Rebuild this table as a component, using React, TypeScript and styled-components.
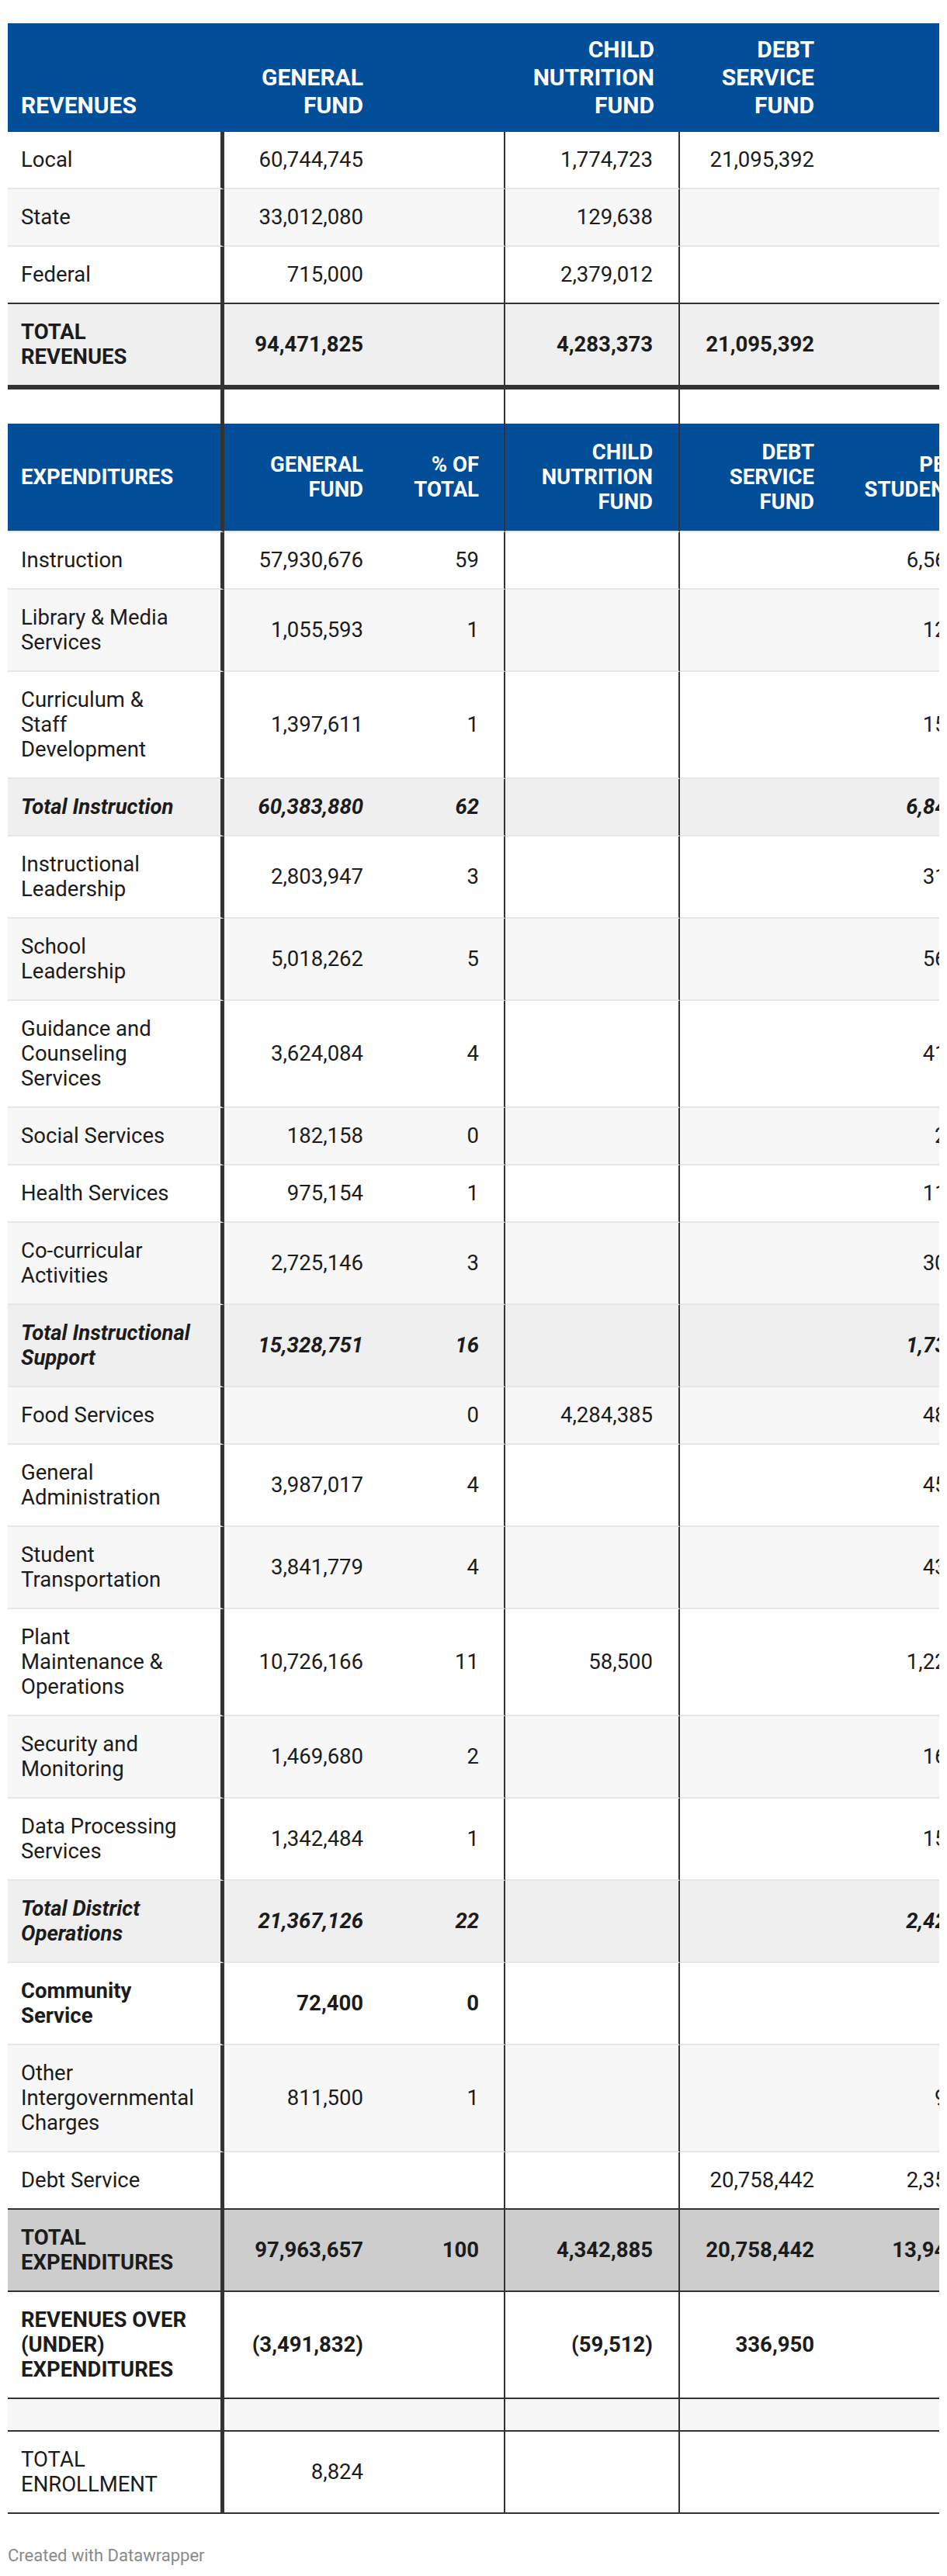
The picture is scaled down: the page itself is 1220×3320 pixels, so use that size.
import React from "react";
import styled, { createGlobalStyle, css } from "styled-components";

const BLUE = "#024e98";
const INK = "#1c1c1c";
const DARK = "#333333";
const LIGHT = "#e6e6e6";

const GlobalStyle = createGlobalStyle`
  html, body { margin: 0; padding: 0; background: #ffffff; }
  body { font-family: Roboto, "Liberation Sans", Arial, sans-serif; color: ${INK}; }
`;

type Divider = "thick" | "thin" | "none";
type Rule = "light" | "dark" | "thick" | "none";
type Shade = "white" | "alt" | "sub" | "grand";
type Weight = "normal" | "bold" | "boldItalic";

const COLUMNS: { width: number; divider: Divider; padRight: number }[] = [
  { width: 279, divider: "thick", padRight: 35 },
  { width: 212, divider: "none", padRight: 33 },
  { width: 150, divider: "thin", padRight: 32 },
  { width: 225, divider: "thin", padRight: 33 },
  { width: 206, divider: "none", padRight: 33 },
  { width: 186, divider: "none", padRight: 33 },
];
const TEMPLATE = COLUMNS.map((c) => `${c.width}px`).join(" ");
const TABLE_WIDTH = COLUMNS.reduce((s, c) => s + c.width, 0);

const SHADES: Record<Shade, string> = {
  white: "#ffffff",
  alt: "#f7f7f7",
  sub: "#efefef",
  grand: "#cdcdcd",
};

const RULES: Record<Rule, string> = {
  light: `2px solid ${LIGHT}`,
  dark: `2px solid ${DARK}`,
  thick: `6px solid ${DARK}`,
  none: "0",
};

const Page = styled.main`
  padding: 30px 10px 20px 10px;
`;

const Viewport = styled.div`
  width: 1200px;
  overflow: hidden;
`;

const Table = styled.div`
  display: flex;
  flex-direction: column;
  width: ${TABLE_WIDTH}px;
`;

const Cell = styled.div<{ $divider: Divider; $label: boolean; $padRight: number }>`
  box-sizing: border-box;
  display: flex;
  align-items: center;
  justify-content: ${(p) => (p.$label ? "flex-start" : "flex-end")};
  text-align: ${(p) => (p.$label ? "left" : "right")};
  padding: 20px ${(p) => p.$padRight}px 20px ${(p) => (p.$label ? 17 : 16)}px;
  border-right: ${(p) =>
    p.$divider === "thick"
      ? `5px solid ${DARK}`
      : p.$divider === "thin"
      ? `2px solid ${DARK}`
      : "0"};
`;

const Row = styled.div<{ $shade: Shade; $rule: Rule; $weight: Weight; $spacer?: boolean }>`
  display: grid;
  grid-template-columns: ${TEMPLATE};
  background: ${(p) => SHADES[p.$shade]};
  font-size: 27.5px;
  line-height: 32px;
  color: ${INK};
  font-weight: ${(p) => (p.$weight === "normal" ? 400 : 700)};
  font-style: ${(p) => (p.$weight === "boldItalic" ? "italic" : "normal")};

  & > ${Cell} {
    border-bottom: ${(p) => RULES[p.$rule]};
    ${(p) =>
      p.$spacer &&
      css`
        padding-top: 0;
        padding-bottom: 0;
        min-height: ${p.$rule === "none" ? 44 : 42}px;
      `}
  }
`;

const HeadRow = styled.div`
  display: grid;
  grid-template-columns: ${TEMPLATE};
  background: ${BLUE};
  color: #ffffff;
  font-size: 30px;
  line-height: 36px;
  font-weight: 700;
  text-transform: uppercase;

  & > ${Cell} {
    align-items: flex-end;
    padding-top: 16px;
    padding-bottom: 16px;
    border-right: 0;
  }
`;

const BandRow = styled.div`
  display: grid;
  grid-template-columns: ${TEMPLATE};
  background: ${BLUE};
  color: #ffffff;
  font-size: 27.5px;
  line-height: 32px;
  font-weight: 700;
  text-transform: uppercase;

  & > ${Cell} {
    padding-top: 21px;
    padding-bottom: 21px;
    border-bottom: ${RULES.light};
  }
`;

const Credit = styled.p`
  margin: 41px 0 0 0;
  font-size: 22px;
  line-height: 26px;
  color: #8a8a8a;
`;

type DataRow = {
  label: string;
  values: [string, string, string, string, string];
  shade: Shade;
  rule?: Rule;
  weight?: Weight;
  spacer?: boolean;
  band?: boolean;
};

const E = "";

const REVENUE_HEAD = ["Revenues", "General Fund", "", "Child Nutrition Fund", "Debt Service Fund", ""];
const EXPENSE_HEAD = [
  "Expenditures",
  "General Fund",
  "% of Total",
  "Child Nutrition Fund",
  "Debt Service Fund",
  "Per Student",
];

const ROWS: DataRow[] = [
  { label: "Local", values: ["60,744,745", E, "1,774,723", "21,095,392", E], shade: "white" },
  { label: "State", values: ["33,012,080", E, "129,638", E, E], shade: "alt" },
  { label: "Federal", values: ["715,000", E, "2,379,012", E, E], shade: "white", rule: "dark" },
  {
    label: "TOTAL REVENUES",
    values: ["94,471,825", E, "4,283,373", "21,095,392", E],
    shade: "sub",
    weight: "bold",
    rule: "thick",
  },
  { label: E, values: [E, E, E, E, E], shade: "white", rule: "none", spacer: true },
  { label: E, values: [E, E, E, E, E], shade: "white", band: true },
  { label: "Instruction", values: ["57,930,676", "59", E, E, "6,565"], shade: "white" },
  { label: "Library & Media Services", values: ["1,055,593", "1", E, E, "120"], shade: "alt" },
  { label: "Curriculum & Staff Development", values: ["1,397,611", "1", E, E, "158"], shade: "white" },
  {
    label: "Total Instruction",
    values: ["60,383,880", "62", E, E, "6,843"],
    shade: "sub",
    weight: "boldItalic",
  },
  { label: "Instructional Leadership", values: ["2,803,947", "3", E, E, "318"], shade: "white" },
  { label: "School Leadership", values: ["5,018,262", "5", E, E, "569"], shade: "alt" },
  { label: "Guidance and Counseling Services", values: ["3,624,084", "4", E, E, "411"], shade: "white" },
  { label: "Social Services", values: ["182,158", "0", E, E, "21"], shade: "alt" },
  { label: "Health Services", values: ["975,154", "1", E, E, "111"], shade: "white" },
  { label: "Co-curricular Activities", values: ["2,725,146", "3", E, E, "309"], shade: "alt" },
  {
    label: "Total Instructional Support",
    values: ["15,328,751", "16", E, E, "1,737"],
    shade: "sub",
    weight: "boldItalic",
  },
  { label: "Food Services", values: [E, "0", "4,284,385", E, "486"], shade: "alt" },
  { label: "General Administration", values: ["3,987,017", "4", E, E, "452"], shade: "white" },
  { label: "Student Transportation", values: ["3,841,779", "4", E, E, "435"], shade: "alt" },
  {
    label: "Plant Maintenance & Operations",
    values: ["10,726,166", "11", "58,500", E, "1,222"],
    shade: "white",
  },
  { label: "Security and Monitoring", values: ["1,469,680", "2", E, E, "167"], shade: "alt" },
  { label: "Data Processing Services", values: ["1,342,484", "1", E, E, "152"], shade: "white" },
  {
    label: "Total District Operations",
    values: ["21,367,126", "22", E, E, "2,422"],
    shade: "sub",
    weight: "boldItalic",
  },
  { label: "Community Service", values: ["72,400", "0", E, E, "8"], shade: "white", weight: "bold" },
  { label: "Other Intergovernmental Charges", values: ["811,500", "1", E, E, "92"], shade: "alt" },
  { label: "Debt Service", values: [E, E, E, "20,758,442", "2,353"], shade: "white", rule: "dark" },
  {
    label: "TOTAL EXPENDITURES",
    values: ["97,963,657", "100", "4,342,885", "20,758,442", "13,947"],
    shade: "grand",
    weight: "bold",
    rule: "dark",
  },
  {
    label: "REVENUES OVER (UNDER) EXPENDITURES",
    values: ["(3,491,832)", E, "(59,512)", "336,950", E],
    shade: "white",
    weight: "bold",
    rule: "dark",
  },
  { label: E, values: [E, E, E, E, E], shade: "alt", rule: "dark", spacer: true },
  { label: "TOTAL ENROLLMENT", values: ["8,824", E, E, E, E], shade: "white", rule: "dark" },
];

function Cells({ texts, head }: { texts: string[]; head?: boolean }) {
  return (
    <>
      {texts.map((t, i) => (
        <Cell
          key={i}
          $divider={head ? "none" : COLUMNS[i].divider}
          $label={i === 0}
          $padRight={COLUMNS[i].padRight}
        >
          {t}
        </Cell>
      ))}
    </>
  );
}

export default function App() {
  return (
    <>
      <GlobalStyle />
      <Page>
        <Viewport>
          <Table>
            <HeadRow>
              <Cells texts={REVENUE_HEAD} head />
            </HeadRow>
            {ROWS.map((r, i) =>
              r.band ? (
                <BandRow key={i}>
                  <Cells texts={EXPENSE_HEAD} />
                </BandRow>
              ) : (
                <Row
                  key={i}
                  $shade={r.shade}
                  $rule={r.rule ?? "light"}
                  $weight={r.weight ?? "normal"}
                  $spacer={r.spacer}
                >
                  <Cells texts={[r.label, ...r.values]} />
                </Row>
              )
            )}
          </Table>
        </Viewport>
        <Credit>Created with Datawrapper</Credit>
      </Page>
    </>
  );
}
